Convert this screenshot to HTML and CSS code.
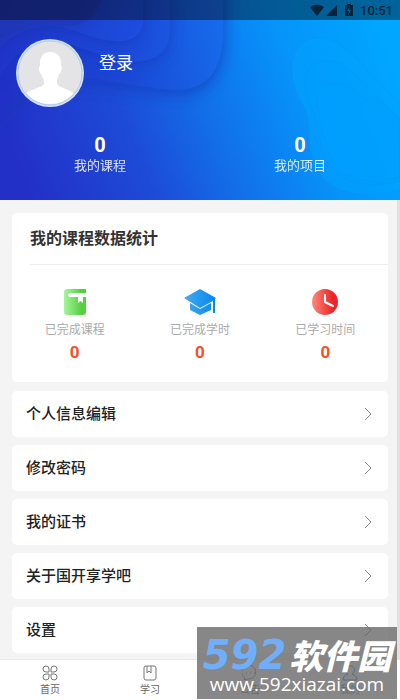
FILE: index.html
```html
<!DOCTYPE html>
<html lang="zh-CN">
<head>
<meta charset="utf-8">
<meta name="viewport" content="width=device-width, initial-scale=1">
<title>我的</title>
<link rel="stylesheet" href="styles.css">
</head>
<body>
<div class="app">
  <header class="hero">
    <svg class="hero-art" viewBox="0 0 400 200" preserveAspectRatio="none" aria-hidden="true">
      <defs>
        <linearGradient id="sky" x1="0" y1="0.6" x2="1" y2="0.4">
          <stop offset="0" stop-color="#2330c8"/>
          <stop offset="0.3" stop-color="#1d4bd8"/>
          <stop offset="0.5" stop-color="#136ee8"/>
          <stop offset="0.75" stop-color="#0694fa"/>
          <stop offset="1" stop-color="#00a6ff"/>
        </linearGradient>
        <linearGradient id="fold" gradientUnits="userSpaceOnUse" x1="0" y1="80" x2="223" y2="20">
          <stop offset="0" stop-color="#2130c6"/>
          <stop offset="0.5" stop-color="#1b46d4"/>
          <stop offset="1" stop-color="#166cec"/>
        </linearGradient>
        <linearGradient id="fold2" gradientUnits="userSpaceOnUse" x1="0" y1="60" x2="170" y2="20">
          <stop offset="0" stop-color="#2233c8"/>
          <stop offset="1" stop-color="#1a55e0"/>
        </linearGradient>
        <linearGradient id="fold3" gradientUnits="userSpaceOnUse" x1="0" y1="10" x2="143" y2="40">
          <stop offset="0" stop-color="#2136bc"/>
          <stop offset="1" stop-color="#1c4ee0"/>
        </linearGradient>
        <filter id="soft" x="-20%" y="-20%" width="140%" height="150%"><feGaussianBlur stdDeviation="7"/></filter>
      </defs>
      <rect width="400" height="200" fill="url(#sky)"/>
      <path d="M-20 -20H226V40C224 74 210 94 182 96C130 95 70 74 35 96C18 107 8 120 -20 142Z" fill="#1235b8" opacity=".55" filter="url(#soft)"/>
      <path d="M0 0H223V38C221 70 208 88 180 90C128 89 68 65 32 86C15 96 8 108 0 120Z" fill="url(#fold)"/>
      <path d="M-20 -20H172V30C172 54 160 67 132 65C96 62 73 44 47 48C21 52 8 68 -20 90Z" fill="#1535bc" opacity=".5" filter="url(#soft)"/>
      <path d="M0 0H170V30C170 51 157 63 130 61C94 58 73 39 47 42C21 46 12 58 0 76Z" fill="url(#fold2)"/>
      <path d="M-20 -20H145V22C144 42 130 48 105 44C76 38 62 26 38 31C18 35 8 43 -20 62Z" fill="#1733b6" opacity=".5" filter="url(#soft)"/>
      <path d="M0 0H143V22C142 38 128 44 105 40C76 34 62 22 38 27C18 31 9 39 0 48Z" fill="url(#fold3)"/>
      <path d="M-20 -20H104C96 26 71 27 53 24C32 22 15 29 -20 44Z" fill="#1a2fa8" opacity=".5" filter="url(#soft)"/>
      <path d="M0 0H102C94 26 71 28 53 24C32 21 15 27 0 36Z" fill="#1f38b8" opacity=".6"/>
      <path d="M292 71C291 50 302 37 322 38C345 40 362 68 400 103V190C369 197 342 196 325 180C301 155 315 126 303 105C296 94 292 84 292 71Z" fill="#00a5ff" opacity=".45" stroke="#0686eb" stroke-opacity=".35"/>
      <path d="M305 84C304 68 315 60 330 61C352 64 371 91 400 119V181C367 189 341 183 329 164C316 143 320 125 312 108C307 99 305 92 305 84Z" fill="#009fff" opacity=".45" stroke="#0587eb" stroke-opacity=".4"/>
      <path d="M318 98C318 88 327 83 338 84C358 86 376 112 400 133V177C362 188 335 175 328 150C324 132 318 121 318 98Z" fill="#00a0ff" opacity=".5" stroke="#058ef0" stroke-opacity=".4"/>
    </svg>
    <div class="status">
      <svg class="status-icons" viewBox="0 0 44 14" aria-hidden="true">
        <path d="M0 4Q7-1 14 4L7 13Z"/><path d="M27 2V13H16Z"/>
        <path fill-rule="evenodd" d="M37 1h4v1h2v11h-8V2h2zM40 3l-3 5h2l-1 4 3-5h-2z"/>
      </svg>
      <time>10:51</time>
    </div>
    <div class="profile">
      <svg class="avatar" viewBox="0 0 68 68" role="img" aria-label="头像">
        <defs><clipPath id="face"><circle cx="34" cy="34" r="31"/></clipPath></defs>
        <circle cx="34" cy="34" r="34" fill="#cfe3fa"/>
        <circle cx="34" cy="34" r="32" fill="#e4e4e6" stroke="#b5c9ec" stroke-width="1"/>
        <path clip-path="url(#face)" fill="#fff" d="M34 13C42 13 46 19 45 27C47 28 45 34 43 35C42 39 41 40 41 42V45C43 49 54 50 58 55V68H10V55C14 50 26 49 28 45V42C28 40 26 38 25 35C23 33 22 28 24 27C23 19 27 13 34 13Z"/>
      </svg>
      <a class="login" href="#login">登录</a>
    </div>
    <div class="totals">
      <a href="#courses"><strong>0</strong><span>我的课程</span></a>
      <a href="#projects"><strong>0</strong><span>我的项目</span></a>
    </div>
  </header>

  <main class="content">
    <section class="card">
      <h2>我的课程数据统计</h2>
      <div class="stats">
        <div class="stat">
          <svg viewBox="0 0 32 26" aria-hidden="true">
            <defs><linearGradient id="green"><stop stop-color="#a5f79b"/><stop offset=".8" stop-color="#55cf3f"/></linearGradient></defs>
            <path fill="url(#green)" d="M8 0H27V4H11Q9 4 9 6T11 8H19V14L21.500 12L24 14V8H27V23Q27 26 24 26H8Q5 26 5 23V3Q5 0 8 0Z"/>
          </svg>
          <span>已完成课程</span><strong>0</strong>
        </div>
        <div class="stat">
          <svg viewBox="0 0 32 26" aria-hidden="true">
            <defs><linearGradient id="blue"><stop stop-color="#40aaf5"/><stop offset="1" stop-color="#0787ea"/></linearGradient></defs>
            <path fill="url(#blue)" d="M0 9L16 0L32 9L31 10V24H29V12L16 19ZM6 14L16 20L27 14V21L16 26L6 21Z"/>
          </svg>
          <span>已完成学时</span><strong>0</strong>
        </div>
        <div class="stat">
          <svg viewBox="0 0 32 26" aria-hidden="true">
            <defs><linearGradient id="red"><stop stop-color="#ff8a7b"/><stop offset=".8" stop-color="#ea2429"/></linearGradient></defs>
            <circle cx="16" cy="13" r="13" fill="url(#red)"/>
            <path d="M16 6V13L24 17" fill="none" stroke="#fff" stroke-width="2" stroke-linecap="round" stroke-linejoin="round"/>
          </svg>
          <span>已学习时间</span><strong>0</strong>
        </div>
      </div>
    </section>
    <nav class="menu" aria-label="设置菜单">
      <a href="#info">个人信息编辑<svg viewBox="0 0 8 12" aria-hidden="true"><path d="M1 0L7 6L1 12"/></svg></a>
      <a href="#password">修改密码<svg viewBox="0 0 8 12" aria-hidden="true"><path d="M1 0L7 6L1 12"/></svg></a>
      <a href="#certificates">我的证书<svg viewBox="0 0 8 12" aria-hidden="true"><path d="M1 0L7 6L1 12"/></svg></a>
      <a href="#about">关于国开享学吧<svg viewBox="0 0 8 12" aria-hidden="true"><path d="M1 0L7 6L1 12"/></svg></a>
      <a href="#settings">设置<svg viewBox="0 0 8 12" aria-hidden="true"><path d="M1 0L7 6L1 12"/></svg></a>
    </nav>
  </main>

  <nav class="tabs" aria-label="主导航">
    <a href="#home">
      <svg viewBox="0 0 16 16" aria-hidden="true"><path d="M7 7H4A3 3 0 1 1 7 4ZM9 7V4A3 3 0 1 1 12 7ZM7 9V12A3 3 0 1 1 4 9ZM9 9H12A3 3 0 1 1 9 12Z"/></svg>首页</a>
    <a href="#study">
      <svg viewBox="0 0 16 16" aria-hidden="true"><rect x="2" y="1" width="12" height="14" rx="2"/><path d="M5 1V8L7 6L9 8V1"/></svg>学习</a>
    <a href="#notice">
      <svg viewBox="0 0 16 16" aria-hidden="true"><path d="M3 13A7 7 0 1 1 6 14L2 15ZM4 8h1M8 8h1M12 8h1"/></svg>公告</a>
    <a class="current" href="#me">
      <svg viewBox="0 0 16 16" aria-hidden="true"><path d="M6 9C2 6 3 1 8 1S14 6 10 9C13 10 15 12 15 15H1C1 12 3 10 6 9Z"/></svg>我的</a>
  </nav>

  <aside class="stamp">
    <div class="stamp-name"><b>592</b><span>软件园</span></div>
    <div class="stamp-url">www.592xiazai.com</div>
  </aside>
</div>
</body>
</html>
```
FILE: styles.css
```css
* {
  box-sizing: border-box;
}

body {
  margin: 0;
  background: #f4f4f4;
  color: #222;
  font-family: Roboto, "Noto Sans CJK SC", sans-serif;
}

a {
  color: inherit;
  text-decoration: none;
}

svg {
  display: block;
}

.app {
  position: relative;
  display: flex;
  flex-direction: column;
  min-height: 100vh;
  border-right: 3px solid #e1e1e1;
}

.hero {
  position: relative;
  margin-right: -3px;
  padding-bottom: 24px;
  color: #fff;
}

.hero-art {
  position: absolute;
  inset: 0;
  width: 100%;
  height: 100%;
}

.status,
.profile,
.totals {
  position: relative;
  display: flex;
}

.status {
  align-items: center;
  justify-content: flex-end;
  gap: 6px;
  height: 20px;
  padding-right: 7px;
  background: rgba(0, 0, 0, 0.4);
  color: #06233b;
  font-size: 13px;
  font-weight: 500;
}

.status-icons {
  width: 44px;
  height: 14px;
  fill: #06233b;
}

.profile {
  gap: 15px;
  padding: 19px 16px 0;
}

.avatar {
  width: 68px;
  height: 68px;
}

.login {
  padding-top: 12px;
  font-size: 17px;
  line-height: 24px;
}

.totals {
  padding-top: 28px;
}

.totals a {
  display: flex;
  flex: 1;
  flex-direction: column;
  align-items: center;
  font-size: 13px;
  line-height: 20px;
}

.totals strong {
  font-size: 20px;
  line-height: 21px;
}

.totals span {
  opacity: 0.85;
}

.content {
  flex: 1;
  padding: 13px 9px 5px 12px;
}

.card {
  padding: 14px 0 19px 18px;
  border-radius: 5px;
  background: #fff;
}

.card h2 {
  margin: 0;
  padding-bottom: 13px;
  border-bottom: 1px solid #eee;
  color: #333;
  font-size: 16px;
  font-weight: 700;
  line-height: 24px;
}

.stats {
  display: flex;
  margin-left: -18px;
  padding-top: 24px;
}

.stat {
  display: flex;
  flex: 1;
  flex-direction: column;
  align-items: center;
}

.stat svg {
  width: 32px;
  height: 26px;
}

.stat span {
  padding-top: 6px;
  color: #aaa;
  font-size: 12px;
  line-height: 18px;
}

.stat strong {
  padding-top: 2px;
  color: #f5502a;
  font-size: 17px;
  line-height: 22px;
}

.menu {
  display: grid;
  gap: 8px;
  padding-top: 9px;
}

.menu a {
  display: flex;
  align-items: center;
  justify-content: space-between;
  height: 46px;
  padding: 0 16px 4px 14px;
  border-radius: 5px;
  background: #fff;
  font-size: 15px;
  font-weight: 500;
}

.menu svg {
  width: 8px;
  height: 12px;
  margin-top: 4px;
  fill: none;
  stroke: #888;
}

.tabs {
  display: flex;
  margin-right: -3px;
  padding: 5px 0 1px;
  border-top: 1px solid #e9e9e9;
  background: #fff;
  color: #666;
  font-size: 10px;
  line-height: 18px;
}

.tabs a {
  display: flex;
  flex: 1;
  flex-direction: column;
  align-items: center;
}

.tabs svg {
  width: 16px;
  height: 16px;
  fill: none;
  stroke: #777;
}

.tabs .current {
  color: #1287d5;
}

.tabs .current svg {
  stroke: #1287d5;
}

.stamp {
  position: absolute;
  right: 0;
  bottom: 1px;
  width: 200px;
  height: 72px;
  padding-top: 8px;
  background: rgba(105, 105, 105, 0.8);
  color: #fff;
  pointer-events: none;
}

.stamp-name {
  display: flex;
  justify-content: center;
  gap: 3px;
  font-style: italic;
  font-weight: 900;
  line-height: 40px;
}

.stamp-name b {
  color: #70aefa;
  font-family: "DejaVu Sans", sans-serif;
  font-size: 40px;
}

.stamp-name span {
  font-family: "Noto Sans CJK SC", sans-serif;
  font-size: 34px;
}

.stamp-url {
  font-family: "Open Sans", sans-serif;
  font-size: 19px;
  font-weight: 500;
  line-height: 18px;
  text-align: center;
}
```
